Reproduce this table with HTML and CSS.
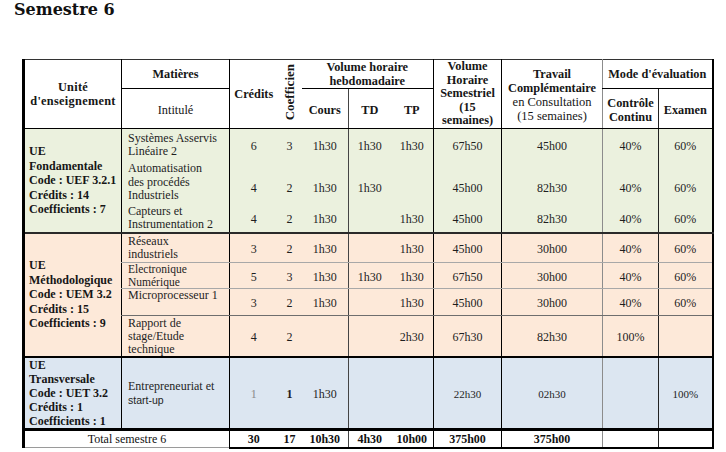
FILE: index.html
```html
<!DOCTYPE html>
<html lang="fr">
<head>
<meta charset="utf-8">
<title>Semestre 6</title>
<link rel="stylesheet" href="styles.css">
</head>
<body>
<h1 class="title">Semestre 6</h1>
<table class="prog">
  <colgroup>
    <col class="c-ue"><col class="c-mat"><col class="c-cred"><col class="c-coef"><col class="c-cours"><col class="c-td"><col class="c-tp"><col class="c-vs"><col class="c-tc"><col class="c-cc"><col class="c-ex">
  </colgroup>
  <thead>
    <tr class="h1row">
      <th rowspan="2" class="h-ue">Unité<br>d'enseignement</th>
      <th class="h-mat">Matières</th>
      <th rowspan="2" class="h-cred">Crédits</th>
      <th rowspan="2" class="h-coef"><span class="vert">Coefficien</span></th>
      <th colspan="3" class="h-vh">Volume horaire<br>hebdomadaire</th>
      <th rowspan="2" class="h-vs">Volume<br>Horaire<br>Semestriel<br>(15<br>semaines)</th>
      <th rowspan="2" class="h-tc">Travail<br>Complémentaire<br><span class="nb">en Consultation<br>(15 semaines)</span></th>
      <th colspan="2" class="h-mode">Mode d'évaluation</th>
    </tr>
    <tr class="h2row">
      <th class="h-int nb">Intitulé</th>
      <th class="h-cours">Cours</th>
      <th>TD</th>
      <th>TP</th>
      <th>Contrôle<br>Continu</th>
      <th>Examen</th>
    </tr>
  </thead>
  <tbody class="g-uef">
    <tr class="r-sys">
      <td rowspan="3" class="ue">UE<br>Fondamentale<br>Code : UEF 3.2.1<br>Crédits : 14<br>Coefficients : 7</td>
      <td class="mat">Systèmes Asservis<br>Linéaire 2</td>
      <td>6</td><td>3</td><td>1h30</td><td>1h30</td><td>1h30</td><td>67h50</td><td>45h00</td><td>40%</td><td>60%</td>
    </tr>
    <tr class="r-auto">
      <td class="mat">Automatisation<br>des procédés<br>Industriels</td>
      <td class="low">4</td><td class="low">2</td><td class="low">1h30</td><td class="low">1h30</td><td class="low"></td><td class="low">45h00</td><td class="low">82h30</td><td class="low">40%</td><td class="low">60%</td>
    </tr>
    <tr class="r-cap">
      <td class="mat">Capteurs et<br>Instrumentation 2</td>
      <td>4</td><td>2</td><td>1h30</td><td></td><td>1h30</td><td>45h00</td><td>82h30</td><td>40%</td><td>60%</td>
    </tr>
  </tbody>
  <tbody class="g-uem">
    <tr class="r-res">
      <td rowspan="4" class="ue">UE<br>Méthodologique<br>Code : UEM 3.2<br>Crédits : 15<br>Coefficients : 9</td>
      <td class="mat">Réseaux<br>industriels</td>
      <td>3</td><td>2</td><td>1h30</td><td></td><td>1h30</td><td>45h00</td><td>30h00</td><td>40%</td><td>60%</td>
    </tr>
    <tr class="r-elec">
      <td class="mat tight">Electronique<br>Numérique</td>
      <td>5</td><td>3</td><td>1h30</td><td>1h30</td><td>1h30</td><td>67h50</td><td>30h00</td><td>40%</td><td>60%</td>
    </tr>
    <tr class="r-micro">
      <td class="mat top">Microprocesseur 1</td>
      <td>3</td><td>2</td><td>1h30</td><td></td><td>1h30</td><td>45h00</td><td>30h00</td><td>40%</td><td>60%</td>
    </tr>
    <tr class="r-rap">
      <td class="mat tight3">Rapport de<br>stage/Etude<br>technique</td>
      <td>4</td><td>2</td><td></td><td></td><td>2h30</td><td>67h30</td><td>82h30</td><td>100%</td><td></td>
    </tr>
  </tbody>
  <tbody class="g-uet">
    <tr class="r-ent">
      <td class="ue ue-t">UE<br>Transversale<br>Code : UET 3.2<br>Crédits : 1<br>Coefficients : 1</td>
      <td class="mat">Entrepreneuriat et<br><span class="sans">start-up</span></td>
      <td class="muted">1</td><td class="strong">1</td><td>1h30</td><td></td><td></td><td class="sm">22h30</td><td class="sm">02h30</td><td></td><td class="sm">100%</td>
    </tr>
  </tbody>
  <tbody class="g-total">
    <tr class="r-total">
      <td colspan="2" class="tlabel">Total semestre 6</td>
      <td>30</td><td>17</td><td>10h30</td><td>4h30</td><td>10h00</td><td>375h00</td><td>375h00</td><td></td><td></td>
    </tr>
  </tbody>
</table>
</body>
</html>
```

FILE: styles.css
```css
html, body {
  margin: 0;
  padding: 0;
  background: #ffffff;
}

body {
  font-family: "Liberation Serif", "Times New Roman", serif;
  color: #1a1a1a;
}

.title {
  font-family: "DejaVu Serif", serif;
  font-weight: bold;
  font-size: 16px;
  line-height: 20px;
  margin: 0;
  padding-left: 14px;
  color: #111111;
}

.prog {
  border-collapse: collapse;
  table-layout: fixed;
  width: 689px;
  margin: 39px 0 0 22px;
  font-size: 12px;
  border-top: 1px solid #333333;
  border-left: 3px solid #000000;
  border-right: 2px solid #000000;
}

.c-ue { width: 98px; border-right: 1px solid #000000; }
.c-mat { width: 108px; border-right: 1px solid #000000; }
.c-cred { width: 48px; }
.c-coef { width: 24px; }
.c-cours { width: 47px; border-right: 1px solid #444444; }
.c-td { width: 42px; }
.c-tp { width: 43px; border-right: 1px solid #000000; }
.c-vs { width: 68px; border-right: 1px solid #000000; }
.c-tc { width: 101px; border-right: 1px solid #8c8c8c; }
.c-cc { width: 56px; border-right: 1px solid #222222; }
.c-ex { width: 54px; }

th {
  padding: 0;
  font-weight: bold;
  text-align: center;
  vertical-align: middle;
  font-size: 12.3px;
  line-height: 14px;
  border-bottom: 1px solid #000000;
  color: #161616;
}

.h1row { height: 29px; }
.h2row { height: 40px; }
.h2row th { padding-top: 3px; }

.nb { font-weight: normal; }

.h-ue { letter-spacing: 0.3px; }

.h-coef { padding: 0; }
.vert {
  display: inline-block;
  writing-mode: vertical-rl;
  transform: rotate(180deg);
  font-size: 13px;
  line-height: 13px;
}

.h-vs { line-height: 13.6px; }
.h-tc { line-height: 14px; padding-top: 2px; }
.h-tc .nb { font-size: 12.5px; }

td {
  padding: 2px 0 0 0;
  text-align: center;
  vertical-align: middle;
  line-height: 14px;
  color: #1e1e1e;
}

.ue {
  text-align: left;
  padding: 0 0 0 4px;
  font-weight: bold;
  line-height: 14.5px;
  color: #161616;
}

.ue-t { line-height: 14px; }

.mat {
  text-align: left;
  padding: 1px 0 0 6px;
  line-height: 13.5px;
}

.mat.tight { font-size: 11.5px; line-height: 12.7px; padding-top: 0; }
.mat.tight3 { line-height: 12.8px; padding-top: 0; }

.g-uef td { background: #ebf1de; }
.g-uem td { background: #fde9d9; }
.g-uet td { background: #dce6f1; }
.g-total td { background: #ffffff; }

.r-sys { height: 32px; }
.r-auto { height: 43px; }
.r-cap { height: 28px; }
.low { padding-top: 12px; }

.g-uem { border-top: 2px solid #2a2a2a; }
.g-uem tr + tr td { border-top: 1px solid #a8a8a8; }
.g-uem tr.r-rap td { border-top: 1px solid #6e6e6e; }
.r-res { height: 30px; }
.r-elec { height: 26px; }
.r-micro { height: 27px; }
.r-rap { height: 41px; }
.mat.top { vertical-align: top; padding-top: 0; }

.g-uet { border-top: 2px solid #000000; }
.r-ent { height: 73px; }
.muted { color: #8a8a8a; }
.strong { font-weight: bold; }
.sm { font-size: 11px; }
.sans {
  font-family: "Liberation Sans", Arial, sans-serif;
  font-size: 10.5px;
}

.g-total { border-top: 3px solid #000000; }
.r-total { height: 18px; }
.r-total td {
  font-weight: bold;
  padding-top: 0;
  line-height: 14px;
  border-bottom: 2px solid #000000;
  color: #111111;
}
.r-total td.tlabel {
  font-weight: normal;
  border-bottom: 1px solid #9a9a9a;
}
```
